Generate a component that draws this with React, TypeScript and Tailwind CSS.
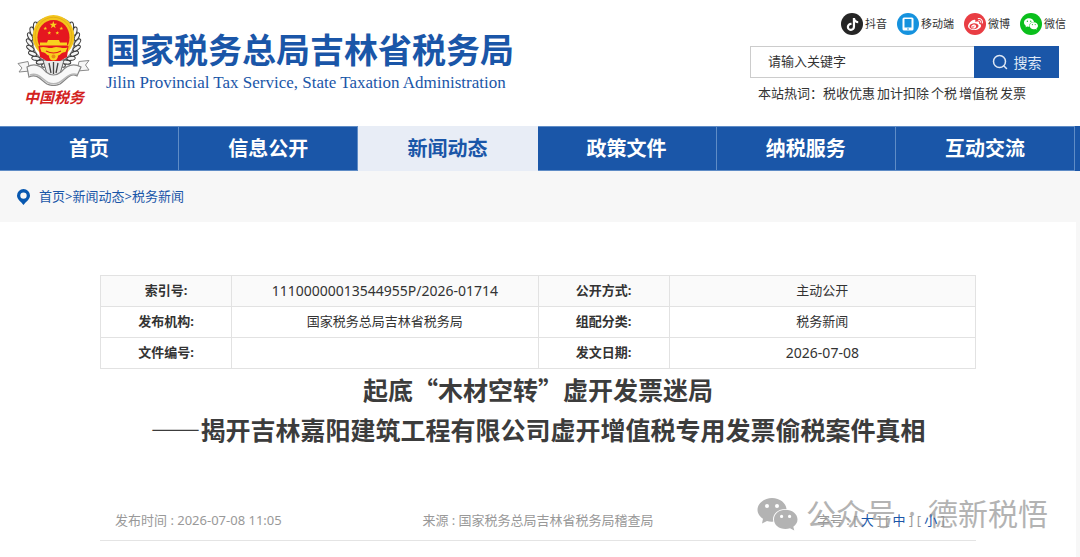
import React from "react";
import { AiFillWechat } from "react-icons/ai";
import { FaTiktok, FaWeibo } from "react-icons/fa";

const star = (cx: number, cy: number, r: number) =>
  Array.from({ length: 10 }, (_, i) => {
    const a = -Math.PI / 2 + (i * Math.PI) / 5;
    const k = i % 2 ? r * 0.4 : r;
    return `${(cx + k * Math.cos(a)).toFixed(2)},${(cy + k * Math.sin(a)).toFixed(2)}`;
  }).join(" ");

const leaves = Array.from({ length: 10 }, (_, i) => (95 + i * 14) * (Math.PI / 180));

function Emblem() {
  return (
    <svg className="h-[72px] w-[76px]" viewBox="0 0 76 72" aria-hidden="true">
      <circle cx="37.5" cy="28" r="23" fill="none" stroke="#8a8a8a" strokeWidth="6" />
      {leaves.map((a, i) => {
        const x = 37.5 + 24 * Math.cos(a);
        const y = 28 + 24 * Math.sin(a);
        const deg = (a * 180) / Math.PI;
        return (
          <g key={i} fill="#f4f4f4" stroke="#3b3b3b" strokeWidth="1">
            <ellipse cx={x} cy={y} rx="4.2" ry="2" transform={`rotate(${deg + 50} ${x} ${y})`} />
            <ellipse cx={75 - x} cy={y} rx="4.2" ry="2" transform={`rotate(${130 - deg} ${75 - x} ${y})`} />
          </g>
        );
      })}
      <path d="M27 46 L48 46 L44 60 L37.5 63 L31 60Z" fill="#e8e8e8" stroke="#666" strokeWidth="1" />
      <path d="M37.5 48V60M33 49l2 10M42 49l-2 10" stroke="#444" strokeWidth="1.3" />
      <ellipse cx="37.5" cy="22.5" rx="20.800" ry="21.500" fill="#f3c51c" />
      <ellipse cx="37.5" cy="22.5" rx="18.400" ry="19.200" fill="none" stroke="#e0a814" strokeWidth="0.8" />
      <path d="M37.5 6C47 6 53.5 14 53.5 23.5C53.5 33 47 39 37.5 39C28 39 21.5 33 21.5 23.5C21.5 14 28 6 37.5 6Z" fill="#e5171f" />
      <path d="M22.500 32L52.500 32L51 43L44 47L31 47L24 43Z" fill="#e5171f" />
      <g fill="#f9d21e">
        <polygon points={star(37.3, 11, 4)} />
        <polygon points={star(29.3, 14.5, 2)} />
        <polygon points={star(45.3, 14.5, 2)} />
        <polygon points={star(33.3, 19, 2)} />
        <polygon points={star(41.3, 19, 2)} />
        <path d="M32 26h11l1 2.500h7v3H24v-3h7z" />
        <path d="M24 33.500c5-2 9 2 13.500 0c4-2 9 2 14 0l-2 4.500c-4 0-5 3-7 3.500h-10c-2-.5-3-3.500-7-3.500z" />
        <circle cx="37.500" cy="42" r="4.500" />
      </g>
      <path d="M30 37q7.500 4 15 0" fill="none" stroke="#e5171f" strokeWidth="1.200" />
      <circle cx="37.500" cy="42.500" r="2" fill="#e98b16" />
      <path d="M2 49.500L12 47.500L14 57L3 58L6 54Z M73 46.500L63 47.500L61 57L73 56L69.500 51Z" fill="#f6f6f6" stroke="#8b8b8b" strokeWidth="1" />
      <path d="M11 53C20 48 26 53 30 58Q37.500 64 45 58C50 52 56 48 65 53L61 62C54 58 50 66 44 70Q37.500 73 31 70C25 66 21 59 13 63Z" fill="#f8f8f8" stroke="#858585" strokeWidth="1.200" />
      <path d="M14 61C22 58 26 65 32 68.500Q37.500 71 43 68.500C49 65 54 58 61 60.500" fill="none" stroke="#b7b7b7" strokeWidth="1.500" />
    </svg>
  );
}

function TabletIcon() {
  return (
    <svg className="h-[14px] w-[12px]" viewBox="0 0 12 14" aria-hidden="true">
      <rect x="0.5" y="0.5" width="11" height="13" rx="1.500" fill="#fff" />
      <rect x="2.500" y="2" width="7" height="8.500" fill="#1592de" />
      <circle cx="6" cy="12" r="0.800" fill="#1592de" />
    </svg>
  );
}

const socials = [
  { label: "抖音", bg: "bg-[#262626]", icon: <FaTiktok className="size-[13px]" /> },
  { label: "移动端", bg: "bg-[#1592de]", icon: <TabletIcon /> },
  { label: "微博", bg: "bg-[#e93d43]", icon: <FaWeibo className="size-[15px]" /> },
  { label: "微信", bg: "bg-[#0abf1c]", icon: <AiFillWechat className="size-[16px]" /> },
];

const nav = ["首页", "信息公开", "新闻动态", "政策文件", "纳税服务", "互动交流"];
const hotWords = ["税收优惠", "加计扣除", "个税", "增值税", "发票"];

const rows = [
  ["索引号:", "11100000013544955P/2026-01714", "公开方式:", "主动公开"],
  ["发布机构:", "国家税务总局吉林省税务局", "组配分类:", "税务新闻"],
  ["文件编号:", "", "发文日期:", "2026-07-08"],
];

export default function App() {
  return (
    <div lang="zh-CN" className="flex min-h-screen flex-col bg-[#f7f7f7] font-['Noto_Sans','Noto_Sans_CJK_SC',sans-serif] text-[13px] text-[#333]">
      <header className="flex h-[126px] items-start justify-between bg-white pr-[14px] pl-4">
        <a href="#" className="flex items-start gap-[14px] pt-[14px]">
          <span className="flex flex-col items-center">
            <Emblem />
            <span className="font-['Noto_Sans_CJK_SC',sans-serif] text-[15px] leading-[22px] font-bold text-[#d3221f] italic">中国税务</span>
          </span>
          <span className="flex flex-col gap-[2px] pt-[15px] whitespace-nowrap text-[#1a56a8]">
            <span className="font-['Noto_Sans_CJK_SC',sans-serif] text-[34px] leading-10 font-bold">国家税务总局吉林省税务局</span>
            <span className="font-['Liberation_Serif',serif] text-[17px] leading-6">Jilin Provincial Tax Service, State Taxation Administration</span>
          </span>
        </a>
        <div className="flex flex-col pt-[13px]">
          <ul className="flex justify-end gap-[10px]">
            {socials.map((s) => (
              <li key={s.label}>
                <a href="#" className="flex items-center gap-[2px] text-[11px] leading-[22px]">
                  <span className={`flex size-[22px] items-center justify-center rounded-full text-white ${s.bg}`}>{s.icon}</span>
                  {s.label}
                </a>
              </li>
            ))}
          </ul>
          <form className="mt-[11px] mr-[7px] flex h-8 w-[309px]" onSubmit={(e) => e.preventDefault()}>
            <input
              type="text"
              aria-label="请输入关键字"
              placeholder="请输入关键字"
              className="min-w-0 flex-1 border border-r-0 border-[#ccc] bg-white pl-[17px] text-[13px] outline-none placeholder:text-[#333]"
            />
            <button type="submit" className="flex w-[85px] items-center justify-center gap-[6px] bg-[#1a56a8] text-[14px] text-[#dfe8f5]">
              <svg className="size-4" viewBox="0 0 16 16" fill="none" stroke="currentColor" strokeWidth="1.500" strokeLinecap="round" aria-hidden="true">
                <circle cx="7.500" cy="7.500" r="6" />
                <path d="M12 12l2.500 2.500" />
              </svg>
              搜索
            </button>
          </form>
          <div className="mt-[5px] flex pl-2 text-[13px] leading-5 whitespace-nowrap">
            <span>本站热词：</span>
            <span className="flex gap-[2px]">
              {hotWords.map((w) => (
                <a key={w} href="#">{w}</a>
              ))}
            </span>
          </div>
        </div>
      </header>

      <nav className="flex h-[45px] bg-[#1a56a8] pr-[5px]">
        {nav.map((n) => (
          <a
            key={n}
            href="#"
            className={`flex flex-1 items-center justify-center border-y border-r text-[20px] font-bold ${n === "新闻动态" ? "border-[#e8edf6] bg-[#e8edf6] text-[#1a56a8]" : "border-[#5f8cc6] text-white"}`}
          >
            {n}
          </a>
        ))}
      </nav>

      <div className="flex h-[51px] items-center gap-[9px] pl-[17px] text-[#1a56a8]">
        <svg className="h-4 w-[13px]" viewBox="0 0 13 16" aria-hidden="true">
          <path fillRule="evenodd" fill="#0858b0" d="M6.500 0A6.500 6.500 0 0 1 13 6.500C13 10.500 8.500 13 6.500 16C4.500 13 0 10.500 0 6.500A6.500 6.500 0 0 1 6.500 0ZM6.500 3.400A3.200 3.200 0 1 0 6.500 9.800A3.200 3.200 0 0 0 6.500 3.400Z" />
        </svg>
        <span>
          <a href="#">首页</a>&gt;<a href="#">新闻动态</a>&gt;<a href="#">税务新闻</a>
        </span>
      </div>

      <main className="mr-1 flex-1 bg-white px-[100px] pt-[53px]">
        <table className="w-full table-fixed border-collapse text-center">
          <colgroup>
            <col className="w-[15%]" />
            <col className="w-[35%]" />
            <col className="w-[15%]" />
            <col className="w-[35%]" />
          </colgroup>
          <tbody>
            {rows.map((r) => (
              <tr key={r[0]} className="h-[31px] first:bg-[#fafafa]">
                {r.map((c, i) =>
                  i % 2 === 0 ? (
                    <th key={i} scope="row" className="border border-[#e2e2e2] font-bold">{c}</th>
                  ) : (
                    <td key={i} className={`border border-[#e2e2e2] ${/\d/.test(c) ? "text-[14px] leading-5" : ""}`}>{c}</td>
                  ),
                )}
              </tr>
            ))}
          </tbody>
        </table>

        <h1 className="text-center font-['Noto_Sans_CJK_SC',sans-serif] text-[25px] leading-10 font-bold text-[#3c3c3c]">
          起底“木材空转”虚开发票迷局
          <br />
          ——揭开吉林嘉阳建筑工程有限公司虚开增值税专用发票偷税案件真相
        </h1>

        <div className="relative mt-[52px] grid h-10 grid-cols-3 items-center border-b border-[#e4e4e4] whitespace-nowrap text-[#999]">
          <span className="pl-[15px]">发布时间 : 2026-07-08 11:05</span>
          <span className="text-center">来源 : 国家税务总局吉林省税务局稽查局</span>
          <span className="z-10 pr-[31px] text-right">
            字号 : [ <button type="button" className="text-[#1a56a8]">大</button> ] [ <button type="button" className="text-[#1a56a8]">中</button> ] [{" "}
            <button type="button" className="text-[#1a56a8]">小</button> ]
          </span>
          <div className="pointer-events-none absolute right-[-72px] bottom-[6px] flex items-center gap-2 text-[#b3b3b3]">
            <svg className="h-[34px] w-[41px]" viewBox="0 0 41 34" fill="currentColor" aria-hidden="true">
              <path fillRule="evenodd" d="M15 1C23 1 29 6 29.500 12C22 11.500 16 16 16 22.500L16.300 24.500C14 25 12 24.500 10 24L5 26.500L6 21.800C3 19.800 .5 16.500 .5 13C.5 6.500 7 1 15 1ZM10 7A2 2 0 1 0 10 11A2 2 0 0 0 10 7ZM20 7A2 2 0 1 0 20 11A2 2 0 0 0 20 7Z" />
              <path fillRule="evenodd" d="M28.500 12.800C35 12.800 40.500 17 40.500 22.500C40.500 25.500 38.800 28 36.300 29.800L37.300 33.500L33 31.300C31.500 31.800 30 32 28.500 32C22 32 17 28 17 22.500C17 17 22 12.800 28.500 12.800ZM24.600 17.800A1.600 1.600 0 1 0 24.600 21A1.600 1.600 0 0 0 24.600 17.800ZM32.600 17.800A1.600 1.600 0 1 0 32.600 21A1.600 1.600 0 0 0 32.600 17.800Z" />
            </svg>
            <span className="flex gap-3 text-[30px] leading-10">
              <span>公众号</span>
              <span>·</span>
              <span>德新税悟</span>
            </span>
          </div>
        </div>
      </main>
    </div>
  );
}
